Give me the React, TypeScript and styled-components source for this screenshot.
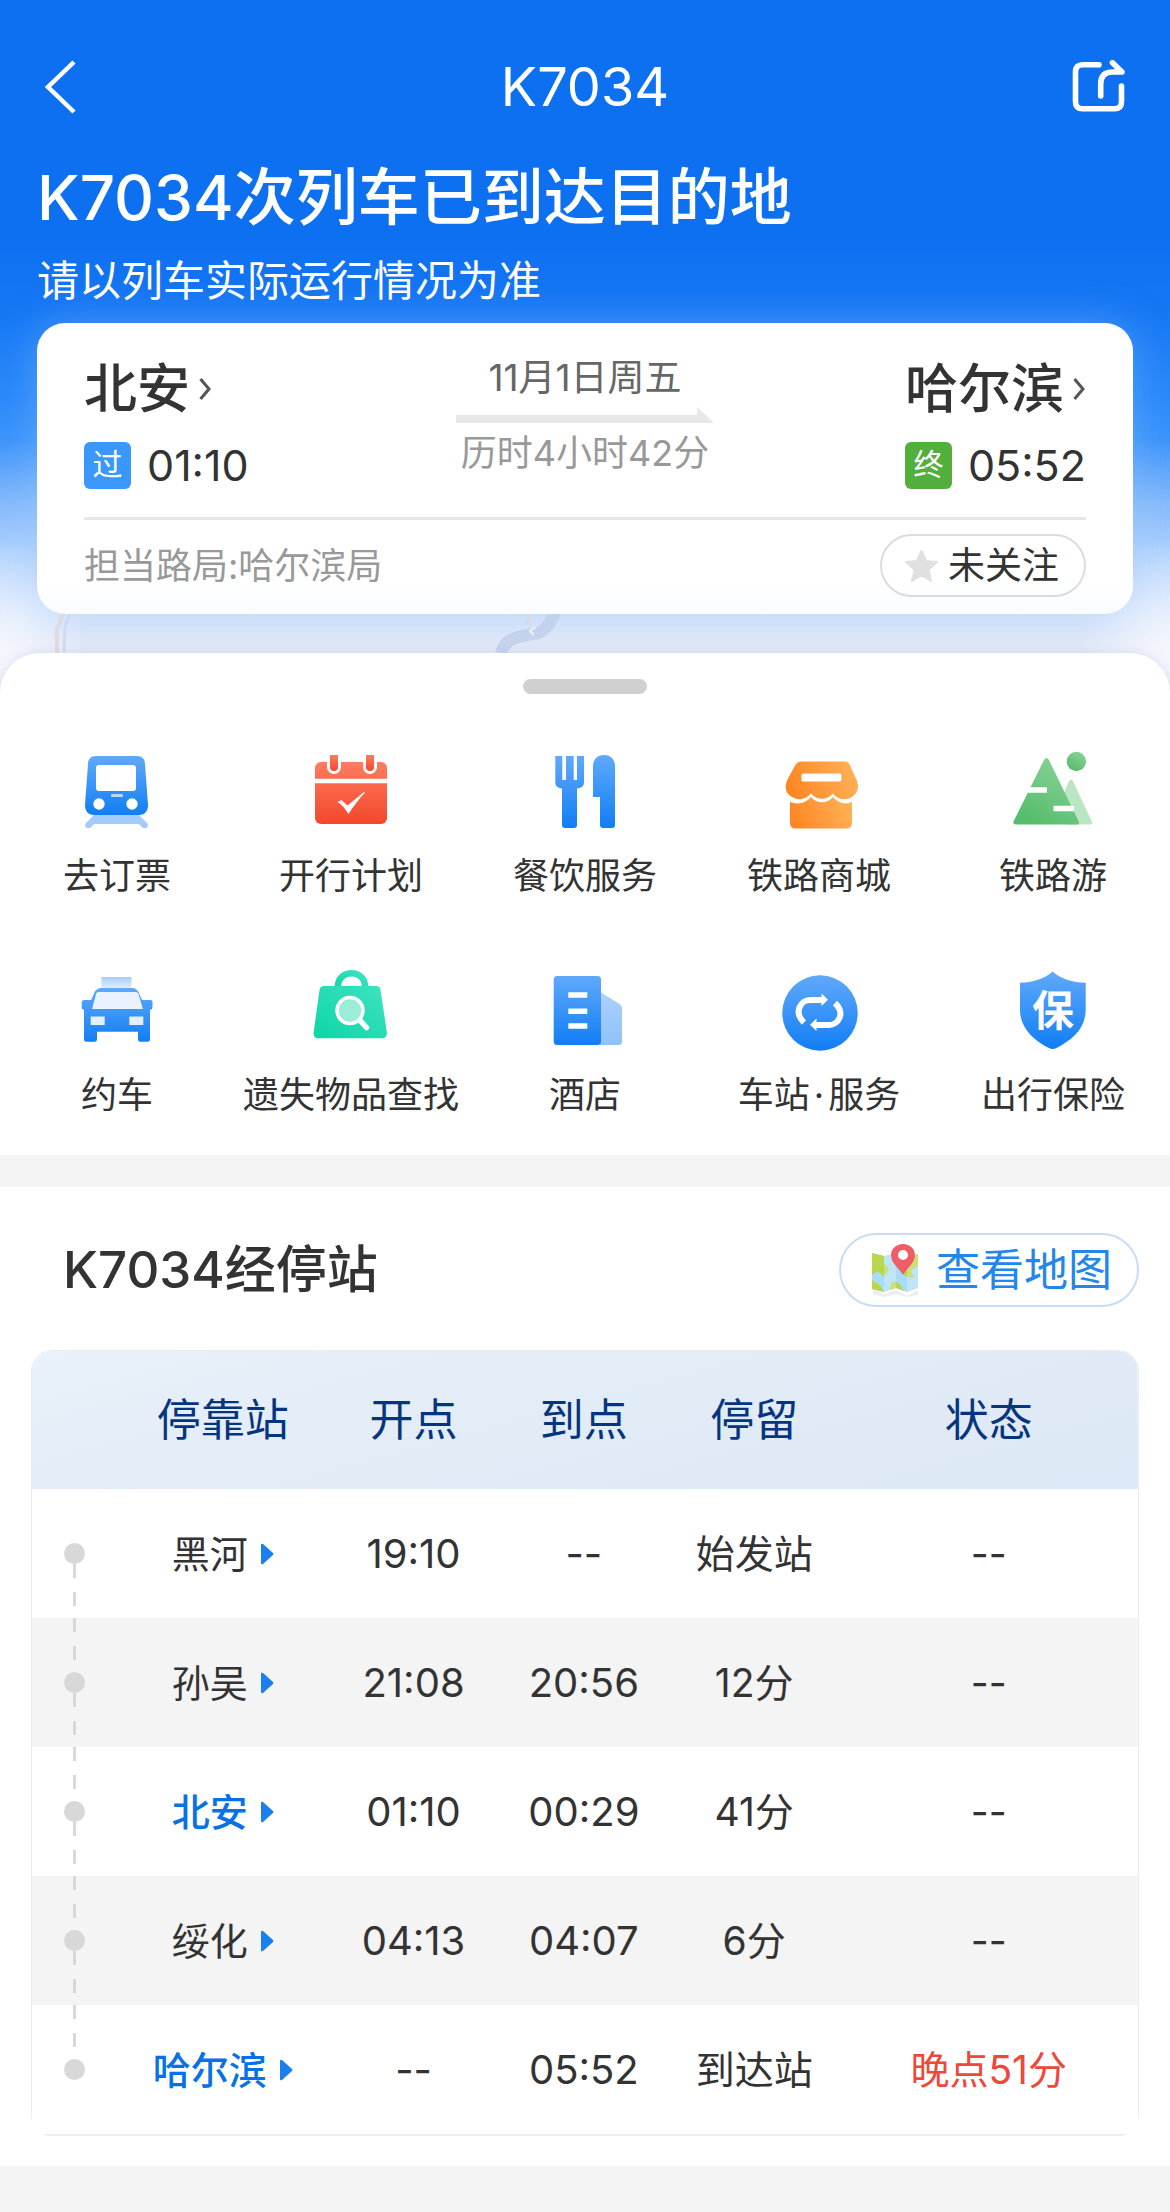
import React from "react";
import styled, { createGlobalStyle } from "styled-components";

const GlobalStyle = createGlobalStyle`
  *, *::before, *::after { box-sizing: border-box; }
  body {
    margin: 0;
    background: #f4f4f4;
    color: #333;
    font-family: Inter, "Noto Sans CJK SC", sans-serif;
  }
  h1, h2, p { margin: 0; }
  button {
    margin: 0;
    padding: 0;
    border: 0;
    background: none;
    color: inherit;
    font: inherit;
    cursor: pointer;
  }
  svg { display: block; flex: none; }
`;

const Page = styled.main`
  display: flex;
  flex-direction: column;
`;

const Hero = styled.header`
  position: relative;
  padding: 47px 37px 79px;
  color: #fff;
  background:
    radial-gradient(ellipse 90px 110px at 0 650px, rgba(250, 250, 255, 0.8), rgba(250, 250, 255, 0)),
    radial-gradient(ellipse 90px 110px at 100% 650px, rgba(250, 250, 255, 0.8), rgba(250, 250, 255, 0)),
    linear-gradient(
      180deg,
      #0d70f0 0,
      #0d70f0 240px,
      #1677f5 310px,
      #2a89fa 400px,
      #3c94fb 440px,
      #82b8fb 500px,
      #acd0fc 550px,
      #cfe1fb 610px,
      #e3e9f6 650px,
      #e6ebf7 100%
    );
`;

const MapTrace = styled.svg`
  position: absolute;
  left: 0;
  bottom: 40px;
`;

const NavBar = styled.nav`
  display: flex;
  align-items: center;
  justify-content: space-between;
  height: 80px;
  padding: 0 7px;
`;

const NavTitle = styled.h1`
  font-size: 54px;
  font-weight: 400;
  line-height: 80px;
`;

const NavButton = styled.button`
  display: flex;
  align-items: center;
  width: 54px;
  height: 60px;
`;

const Headline = styled.h2`
  margin-top: 27px;
  font-size: 62px;
  font-weight: 500;
  line-height: 88px;
`;

const Hint = styled.p`
  margin-top: 10px;
  font-size: 42px;
  line-height: 58px;
`;

const Card = styled.section`
  position: relative;
  margin-top: 13px;
  padding: 30px 47px 0;
  border-radius: 28px;
  color: #333;
  background: linear-gradient(180deg, #fff 88%, #fafcff 100%);
  box-shadow: 0 0 40px rgba(170, 205, 255, 0.35);
`;

const Route = styled.div`
  display: grid;
  grid-template-columns: 1fr auto 1fr;
  padding-bottom: 28px;
  border-bottom: 3px solid #e7e7e7;
`;

const Stop = styled.div<{ $side: "start" | "end" }>`
  display: flex;
  flex-direction: column;
  gap: 17px;
  justify-self: ${(p) => p.$side};
`;

const StopName = styled.button`
  display: flex;
  align-items: center;
  gap: 9px;
  font-size: 53px;
  font-weight: 500;
  line-height: 72px;
`;

const StopTime = styled.div`
  display: flex;
  align-items: center;
  gap: 16px;
  height: 47px;
  font-size: 43px;
  line-height: 47px;
`;

const Badge = styled.span<{ $color: string }>`
  width: 47px;
  height: 47px;
  border-radius: 6px;
  background: ${(p) => p.$color};
  color: #fff;
  font-size: 30px;
  line-height: 45px;
  text-align: center;
`;

const Journey = styled.div`
  display: flex;
  flex-direction: column;
  align-items: center;
  line-height: 50px;
`;

const JourneyDate = styled.span`
  color: #666;
  font-size: 37px;
`;

const JourneyTime = styled.span`
  margin-top: 5px;
  color: #999;
  font-size: 36px;
`;

const JourneyArrow = styled.svg`
  margin-top: 4px;
`;

const CardFoot = styled.div`
  display: flex;
  align-items: center;
  justify-content: space-between;
  padding: 14px 0 17px;
`;

const Bureau = styled.span`
  color: #999;
  font-size: 36px;
  line-height: 50px;
`;

const FollowButton = styled.button`
  display: flex;
  align-items: center;
  gap: 9px;
  height: 63px;
  padding: 0 25px 0 22px;
  border: 2px solid #dcdcdc;
  border-radius: 32px;
  font-size: 37px;
  line-height: 60px;
`;

const Sheet = styled.section`
  position: relative;
  display: flex;
  flex-direction: column;
  margin-top: -40px;
  padding: 26px 0 35px;
  border-radius: 40px 40px 0 0;
  background: #fff;
  box-shadow: 0 0 10px rgba(150, 165, 210, 0.25);
  clip-path: inset(-20px 0 0 0);
`;

const Grabber = styled.div`
  align-self: center;
  width: 124px;
  height: 15px;
  border-radius: 8px;
  background: #d0d0d0;
`;

const ServiceGrid = styled.div`
  display: grid;
  grid-template-columns: repeat(5, 1fr);
  row-gap: 66px;
  margin-top: 54px;
`;

const Service = styled.button`
  display: flex;
  flex-direction: column;
  align-items: center;
  gap: 19px;
  font-size: 36px;
  line-height: 50px;
  white-space: nowrap;
`;

const MiddleDot = styled.span`
  padding: 0 4px;
`;

const Stops = styled.section`
  margin-top: 32px;
  padding: 46px 31px 30px;
  background: #fff;
`;

const StopsHead = styled.div`
  display: flex;
  align-items: center;
  justify-content: space-between;
  padding-left: 32px;
`;

const StopsTitle = styled.h2`
  font-size: 51px;
  font-weight: 500;
  line-height: 74px;
`;

const MapButton = styled.button`
  display: flex;
  align-items: center;
  gap: 16px;
  height: 74px;
  padding: 0 25px 0 29px;
  border: 2px solid #c5def8;
  border-radius: 37px;
  color: #2286ea;
  font-size: 44px;
  line-height: 68px;
`;

const TableFrame = styled.div`
  margin-top: 43px;
  border: 1px solid #ebebeb;
  border-bottom: 2px solid #ececec;
  border-radius: 21px;
`;

const Table = styled.table`
  width: 100%;
  table-layout: fixed;
  border-collapse: collapse;
  background: #fff;
  text-align: center;
  clip-path: inset(0 round 20px 20px 0 0);
`;

const Col = styled.col<{ $share: number }>`
  width: ${(p) => p.$share}%;
`;

const HeadRow = styled.tr`
  height: 138px;
  background: linear-gradient(165deg, #e9f1fa 0%, #e2ecf7 50%, #dce8f5 100%);
`;

const HeadCell = styled.th`
  padding: 0;
  color: #06357f;
  font-size: 44px;
  font-weight: 400;
  line-height: 60px;
`;

const Row = styled.tr`
  height: 129px;
  &:nth-child(even) {
    background: #f4f4f4;
  }
`;

const Cell = styled.td<{ $late?: boolean }>`
  padding: 0;
  color: ${(p) => (p.$late ? "#ef473a" : "#333")};
  font-size: 39px;
  line-height: 54px;
  white-space: nowrap;
`;

const TimeCell = styled(Cell)`
  font-size: 40px;
`;

const Track = styled.div`
  display: flex;
  flex-direction: column;
  align-items: center;
`;

const TrackLine = styled.span<{ $hidden: boolean }>`
  width: 3px;
  height: 54px;
  background: ${(p) =>
    p.$hidden
      ? "none"
      : "repeating-linear-gradient(180deg, #d8d8d8 0 14px, transparent 14px 28px)"};
`;

const TrackDot = styled.span`
  width: 21px;
  height: 21px;
  border-radius: 50%;
  background: #d8d8d8;
`;

const StationLink = styled.a<{ $active: boolean }>`
  display: inline-flex;
  align-items: center;
  gap: 12px;
  color: ${(p) => (p.$active ? "#0672e6" : "#333")};
  font-size: 38px;
  font-weight: ${(p) => (p.$active ? 500 : 400)};
  text-decoration: none;
`;

const Chevron = () => (
  <svg width="12" height="24" viewBox="0 0 12 24" fill="none" aria-hidden="true">
    <path d="M1.5 2 10 12 1.5 22" stroke="#555" strokeWidth="3" />
  </svg>
);

const Gradients = () => (
  <svg width="0" height="0" style={{ position: "absolute" }} aria-hidden="true">
    <defs>
      <linearGradient id="blue" x1="0" y1="0" x2="0" y2="1">
        <stop offset="0" stopColor="#60a9fb" />
        <stop offset="1" stopColor="#117ef4" />
      </linearGradient>
      <linearGradient id="pale" x1="0" y1="0" x2="0" y2="1">
        <stop offset="0" stopColor="#acd0fc" />
        <stop offset="1" stopColor="#8fc2fa" />
      </linearGradient>
      <linearGradient id="sign" x1="0" y1="0" x2="0" y2="1">
        <stop offset="0" stopColor="#a8cbfc" />
        <stop offset="1" stopColor="#e0ecfe" />
      </linearGradient>
      <linearGradient id="red" x1="0" y1="0" x2="0" y2="1">
        <stop offset="0" stopColor="#ff7c60" />
        <stop offset="1" stopColor="#f4472b" />
      </linearGradient>
      <linearGradient id="orange" x1="0" y1="0.5" x2="1" y2="0.3">
        <stop offset="0" stopColor="#ff8624" />
        <stop offset="1" stopColor="#ffb257" />
      </linearGradient>
      <linearGradient id="green" x1="1" y1="0" x2="0.4" y2="1">
        <stop offset="0" stopColor="#8fd59c" />
        <stop offset="1" stopColor="#57bd6e" />
      </linearGradient>
      <linearGradient id="mint" x1="1" y1="0" x2="0" y2="1">
        <stop offset="0" stopColor="#3fe2c2" />
        <stop offset="1" stopColor="#0cd6a6" />
      </linearGradient>
    </defs>
  </svg>
);

const TrainArt = () => (
  <>
    <path d="M20 66h43l9 9a3 3 0 0 1-3 5c-2 0-3-2-5-4H19c-2 2-3 4-5 4a3 3 0 0 1-3-5z" fill="#a3cbfc" />
    <path d="M21 8h41c5 0 8 3 8 8l3 41c0 6-3 10-9 10H19c-6 0-9-4-9-10l3-41c0-5 3-8 8-8z" fill="url(#blue)" />
    <rect x="21" y="17" width="40" height="26" rx="3" fill="#fff" />
    <rect x="36" y="46" width="12" height="3" rx="1" fill="#b9d9fd" />
    <circle cx="24" cy="56" r="5.7" fill="#fff" />
    <circle cx="57" cy="56" r="5.7" fill="#fff" />
  </>
);

const CalendarArt = () => (
  <>
    <rect x="6" y="14" width="72" height="62" rx="6" fill="url(#red)" />
    <path d="M6 33h72" stroke="#fff" strokeWidth="4.5" />
    <path d="M25 12v7M61 12v7" stroke="#fff" strokeWidth="14" strokeLinecap="round" />
    <path d="M21 7h8v12a4 4 0 0 1-8 0zM57 7h8v12a4 4 0 0 1-8 0z" fill="url(#red)" />
    <path d="m28.500 54 4-2 6 5.500L55 44l1 .5C50 51 44 59 39.500 66 36 60 32 56 28.500 54z" fill="#fff" />
  </>
);

const DiningArt = () => (
  <>
    <path d="M12.300 8h7v24h3.700V8h7.700v24H34V8h7v26c0 4-2 6-7 6.500V77c0 2-1 3-3 3h-9c-2 0-3-1-3-3V40.500c-4.500-.5-6.700-2.500-6.700-6.500z" fill="url(#blue)" />
    <path d="M50 18C50 11 55 7 61 7s11 4 11 11v59c0 2-1 3-3 3h-9c-2 0-3-1-3-3V49h-7z" fill="url(#blue)" />
  </>
);

const ShopArt = () => (
  <>
    <path d="M13 54c8 3 16 1 21-5 6 7 16 7 22 0 5 6 12 8 19 5v21c0 3.500-2 5.500-5.500 5.500h-51c-3.500 0-5.500-2-5.500-5.500z" fill="url(#orange)" />
    <path d="M24 13.500h43c3 0 5 1 6 4l6 13c4 8 2 15-5 19-6 3-14 2-18-4-6 7-16 7-22 0-5 6-12 7-18 4-8-4-9-11-5-19l7-13c2-3 4-4 6-4z" fill="url(#orange)" />
    <rect x="24.400" y="25.500" width="40" height="8" rx="2" fill="#fff" />
  </>
);

const MountainArt = () => (
  <>
    <circle cx="65.400" cy="13.500" r="9.700" fill="url(#green)" />
    <path d="M58 33q2-2.500 4 0l19 41q.5 2.500-2 2.500H56l-6-24z" fill="#bbe6c3" />
    <path d="M33 12q2.500-4 5 0l30 62q.5 2.500-2 2.500H5q-3.500 0-2.500-3z" fill="url(#green)" />
    <path d="M15 42h21M42.500 60.500h20.500" stroke="#fff" strokeWidth="5.500" />
  </>
);

const TaxiArt = () => (
  <>
    <rect x="26.400" y="10" width="30" height="11" fill="url(#sign)" />
    <path d="M27 21h30c3.500 0 6 2 7 5l3 7h8c2 0 2.500 1 2.500 2v5c0 2-1 2.500-2.500 3v29c0 2-.5 2.700-2.500 2.700h-7c-2 0-2.500-1-2.500-3v-7H22v7c0 2-.5 3-2.500 3h-8C9.500 74.700 9 74 9 72V43c-1.500-.5-2.300-1-2.300-3v-5c0-1 1-2 2.500-2h7l3-7c1-3 4-5 7.800-5z" fill="url(#blue)" />
    <path d="M23 25h38c1 0 2 1 2.500 2L68 42H17l4-15c.5-1 1-2 2-2z" fill="#e9f2fe" />
    <rect x="15.700" y="49.500" width="14" height="8.500" fill="#e4effe" />
    <rect x="54.300" y="49.500" width="14" height="8.500" fill="#e4effe" />
  </>
);

const LostArt = () => (
  <>
    <path d="M29 24v-5c0-17 27-17 27 0v5" fill="none" stroke="url(#mint)" strokeWidth="6.500" />
    <path d="M15 19h52c3 0 4 1 4.500 4L78 66c0 3-2 5.300-5 5.300H9.500c-3 0-5-2-5-5l6-43c.5-3 2-4.300 4.500-4.300z" fill="url(#mint)" />
    <path d="m51.500 54 6 6.500" stroke="#fff" strokeWidth="5.500" strokeLinecap="round" />
    <circle cx="41" cy="43.500" r="13" fill="#9aeed9" stroke="#fff" strokeWidth="3.500" />
  </>
);

const HotelArt = () => (
  <>
    <path d="M57 25 75 36c3 2 4 3 4 6v33c0 2-1 3-3 3H57z" fill="url(#pale)" />
    <rect x="10.700" y="9" width="47.300" height="69" rx="3.500" fill="url(#blue)" />
    <path d="M25.300 28h19M25.300 44.300h19M25.300 59h19" stroke="#fff" strokeWidth="5.600" />
  </>
);

const StationArt = () => (
  <>
    <circle cx="43" cy="46" r="37.700" fill="url(#blue)" />
    <g fill="none" stroke="#fff" strokeWidth="6">
      <path d="M27 55.500C16 45 24 33 33 33h13" />
      <path d="M58 36c11 10.500 3 22-6 22H38" />
    </g>
    <path d="m44.500 26.500 6.500 6.300-6.500 6.300zM39.500 51.500 33 57.800l6.500 6.300z" fill="#fff" />
  </>
);

const ShieldArt = () => (
  <>
    <path d="M41.700 4.500C50 12 61 15.500 74.700 15.700v28C74 62 61 73 45.500 81q-3.800 1.800-7.600 0C22 73 9.500 61 9 43.700v-28C22 15.500 33 12 41.700 4.500z" fill="url(#blue)" />
    <text x="42" y="59" textAnchor="middle" fill="#fff" fontSize="42" fontWeight="700">
      保
    </text>
  </>
);

const MapPinIcon = () => (
  <svg width="50" height="54" viewBox="0 0 50 54" aria-hidden="true">
    <path d="m3 46 11 5 12-4 11 6 11-6v5l-11 2-11-3-12 3-11-3z" fill="#ececf2" />
    <path d="m2 10 12 3 12-3 11 3 11-2v34l-11 4-11-4-12 4-12-3z" fill="#a9dcf8" />
    <path d="m2 10 12 3v7l5 6-5 8-6-6-6 4zM26 10l11 3 11-2v12l-7 4 3 8-9-2-7-10zM2 37l8 5 4 7-12-3zM22 38l7 2 5 8-8-3-6 2z" fill="#b9d64c" />
    <path d="m37 13 11-2v34l-11 4zM14 13l12-3v35l-12 4z" fill="#fff" opacity="0.25" />
    <path d="M33 1c7 0 12 5 12 11 0 8-8 13-12 20-4-7-12-12-12-20C21 6 26 1 33 1z" fill="#ee5d68" />
    <circle cx="33" cy="12" r="5" fill="#fff" />
  </svg>
);

const services = [
  { name: "去订票", Art: TrainArt },
  { name: "开行计划", Art: CalendarArt },
  { name: "餐饮服务", Art: DiningArt },
  { name: "铁路商城", Art: ShopArt },
  { name: "铁路游", Art: MountainArt },
  { name: "约车", Art: TaxiArt },
  { name: "遗失物品查找", Art: LostArt },
  { name: "酒店", Art: HotelArt },
  { name: "车站·服务", Art: StationArt },
  { name: "出行保险", Art: ShieldArt },
];

const ServiceName = ({ name }: { name: string }) => {
  const [head, tail] = name.split("·");
  return (
    <span>
      {head}
      {tail && <MiddleDot>·</MiddleDot>}
      {tail}
    </span>
  );
};

const columns = [
  { title: "", share: 7.7 },
  { title: "停靠站", share: 19.1 },
  { title: "开点", share: 15.4 },
  { title: "到点", share: 15.4 },
  { title: "停留", share: 15.4 },
  { title: "状态", share: 27 },
];

const stops = [
  { name: "黑河", depart: "19:10", arrive: "--", stay: "始发站", status: "--", active: false },
  { name: "孙吴", depart: "21:08", arrive: "20:56", stay: "12分", status: "--", active: false },
  { name: "北安", depart: "01:10", arrive: "00:29", stay: "41分", status: "--", active: true },
  { name: "绥化", depart: "04:13", arrive: "04:07", stay: "6分", status: "--", active: false },
  { name: "哈尔滨", depart: "--", arrive: "05:52", stay: "到达站", status: "晚点51分", active: true },
];

export default function App() {
  return (
    <Page lang="zh-CN">
      <GlobalStyle />
      <Gradients />
      <Hero>
        <MapTrace width="620" height="44" viewBox="0 0 620 44" fill="none" aria-hidden="true">
          <path d="M65 0 57 20v24" stroke="#e2dbe0" strokeWidth="4" />
          <path d="M71 0l-6 18-1 26" stroke="#d3dcee" strokeWidth="3" />
          <path d="M556 0c-3 12-9 19-17 24-10 2-20 2-30 8-5 4-7 8-8 12" stroke="#c6d3ec" strokeWidth="12" />
          <path d="m532 0-5 16" stroke="#dfdbe3" strokeWidth="4" />
          <path d="m536 18-6 4 4 4" stroke="#f2f5fc" strokeWidth="2" />
        </MapTrace>
        <NavBar>
          <NavButton type="button" aria-label="返回">
            <svg width="34" height="56" viewBox="0 0 34 56" fill="none" aria-hidden="true">
              <path d="M30 3 4 28l26 25" stroke="#fff" strokeWidth="4.500" />
            </svg>
          </NavButton>
          <NavTitle>K7034</NavTitle>
          <NavButton type="button" aria-label="分享">
            <svg width="54" height="54" viewBox="0 0 54 54" fill="none" stroke="#fff" strokeWidth="5.600" strokeLinecap="round" strokeLinejoin="round" aria-hidden="true">
              <path d="M27 4.700H10.500Q3.500 4.700 3.500 11.700v30q0 7 7 7h32q7 0 7-7V26" />
              <path d="M28.700 36V24q0-12 12-12H50L40.500 2.800" />
            </svg>
          </NavButton>
        </NavBar>
        <Headline>K7034次列车已到达目的地</Headline>
        <Hint>请以列车实际运行情况为准</Hint>
        <Card>
          <Route>
            <Stop $side="start">
              <StopName type="button">
                北安
                <Chevron />
              </StopName>
              <StopTime>
                <Badge $color="#3a98fc">过</Badge>
                <time>01:10</time>
              </StopTime>
            </Stop>
            <Journey>
              <JourneyDate>11月1日周五</JourneyDate>
              <JourneyArrow width="258" height="16" viewBox="0 0 258 16" aria-hidden="true">
                <path d="M0 8h241V0l17 16H0z" fill="#e8e8e8" />
              </JourneyArrow>
              <JourneyTime>历时4小时42分</JourneyTime>
            </Journey>
            <Stop $side="end">
              <StopName type="button">
                哈尔滨
                <Chevron />
              </StopName>
              <StopTime>
                <Badge $color="#52af3d">终</Badge>
                <time>05:52</time>
              </StopTime>
            </Stop>
          </Route>
          <CardFoot>
            <Bureau>担当路局:哈尔滨局</Bureau>
            <FollowButton type="button">
              <svg width="35" height="34" viewBox="0 0 35 34" aria-hidden="true">
                <path
                  d="m17.500 2 4.500 10 11 1-8.500 7.500L27 32l-9.500-6L8 32l2.500-11.500L2 13l11-1z"
                  fill="#e0e0e0"
                  stroke="#e0e0e0"
                  strokeWidth="2"
                  strokeLinejoin="round"
                />
              </svg>
              未关注
            </FollowButton>
          </CardFoot>
        </Card>
      </Hero>

      <Sheet>
        <Grabber />
        <ServiceGrid>
          {services.map(({ name, Art }) => (
            <Service type="button" key={name}>
              <svg width="84" height="84" viewBox="0 0 84 84" aria-hidden="true">
                <Art />
              </svg>
              <ServiceName name={name} />
            </Service>
          ))}
        </ServiceGrid>
      </Sheet>

      <Stops>
        <StopsHead>
          <StopsTitle>K7034经停站</StopsTitle>
          <MapButton type="button">
            <MapPinIcon />
            查看地图
          </MapButton>
        </StopsHead>
        <TableFrame>
          <Table>
            <colgroup>
              {columns.map((c) => (
                <Col key={c.title} $share={c.share} />
              ))}
            </colgroup>
            <thead>
              <HeadRow>
                {columns.map((c) => (
                  <HeadCell key={c.title} scope="col">
                    {c.title}
                  </HeadCell>
                ))}
              </HeadRow>
            </thead>
            <tbody>
              {stops.map((s, i) => (
                <Row key={s.name}>
                  <Cell>
                    <Track>
                      <TrackLine $hidden={i === 0} />
                      <TrackDot />
                      <TrackLine $hidden={i === stops.length - 1} />
                    </Track>
                  </Cell>
                  <Cell>
                    <StationLink href="#" $active={s.active}>
                      {s.name}
                      <svg width="14" height="22" viewBox="0 0 14 22" aria-hidden="true">
                        <path d="M1 2q0-2 2-1l10 9q1 1 0 2L3 21q-2 1-2-1z" fill="#1b80ee" />
                      </svg>
                    </StationLink>
                  </Cell>
                  <TimeCell>{s.depart}</TimeCell>
                  <TimeCell>{s.arrive}</TimeCell>
                  <Cell>{s.stay}</Cell>
                  <Cell $late={s.status !== "--"}>{s.status}</Cell>
                </Row>
              ))}
            </tbody>
          </Table>
        </TableFrame>
      </Stops>
    </Page>
  );
}
